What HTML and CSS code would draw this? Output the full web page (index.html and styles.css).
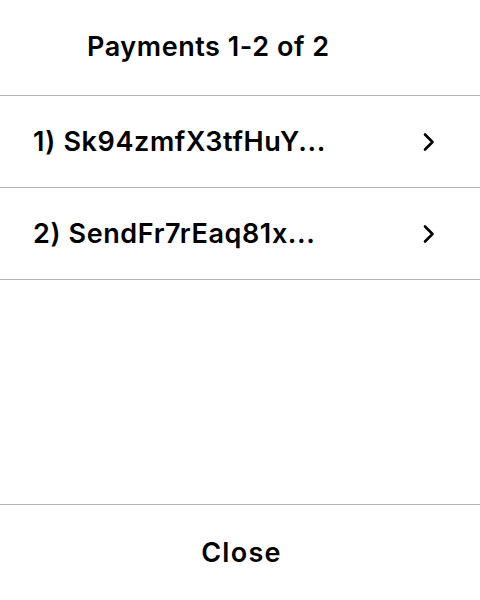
FILE: index.html
```html
<!DOCTYPE html>
<html>
<head>
<meta charset="utf-8">
<link rel="stylesheet" href="styles.css">
</head>
<body>
<div class="sheet">
  <header class="header">
    <h1 class="title">Payments 1-2 of 2</h1>
  </header>
  <ul class="list">
    <li class="row">
      <span class="label">1) Sk94zmfX3tfHuY...</span>
      <svg class="chev" width="14" height="20" viewBox="0 0 14 20"><path d="M3 2.5 L10.5 10 L3 17.5" fill="none" stroke="#000" stroke-width="2.6" stroke-linecap="round" stroke-linejoin="round"/></svg>
    </li>
    <li class="row">
      <span class="label">2) SendFr7rEaq81x...</span>
      <svg class="chev" width="14" height="20" viewBox="0 0 14 20"><path d="M3 2.5 L10.5 10 L3 17.5" fill="none" stroke="#000" stroke-width="2.6" stroke-linecap="round" stroke-linejoin="round"/></svg>
    </li>
  </ul>
  <div class="spacer"></div>
  <footer class="footer">
    <button class="close">Close</button>
  </footer>
</div>
</body>
</html>
```
FILE: styles.css
```css
* { box-sizing: border-box; }
html, body { margin: 0; padding: 0; background: #fff; }
body {
  font-family: Inter, "Noto Sans", sans-serif;
  color: #000;
}
.sheet {
  width: 480px;
  height: 600px;
  display: flex;
  flex-direction: column;
}
.header {
  height: 96px;
  border-bottom: 1px solid #b3b3b3;
  display: flex;
  align-items: flex-start;
  padding: 29px 0 0 87px;
}
.title {
  margin: 0;
  font-size: 27px;
  font-weight: 560;
  line-height: 36px;
  letter-spacing: 0.55px;
}
.list { list-style: none; margin: 0; padding: 0; }
.row {
  height: 92px;
  border-bottom: 1px solid #b3b3b3;
  display: flex;
  align-items: center;
  justify-content: space-between;
  padding: 0 44px 0 33px;
}
.label {
  font-size: 27px;
  font-weight: 560;
  letter-spacing: 0.6px;
}
.chev { display: block; }
.spacer { flex: 1; border-bottom: 1px solid #b3b3b3; }
.footer {
  height: 95px;
  display: flex;
  align-items: center;
  justify-content: center;
}
.close {
  border: 0;
  background: none;
  padding: 0;
  font-family: inherit;
  font-size: 27px;
  font-weight: 560;
  letter-spacing: 1.3px;
  color: #000;
  margin: 0 0 0 3px;
}
```
